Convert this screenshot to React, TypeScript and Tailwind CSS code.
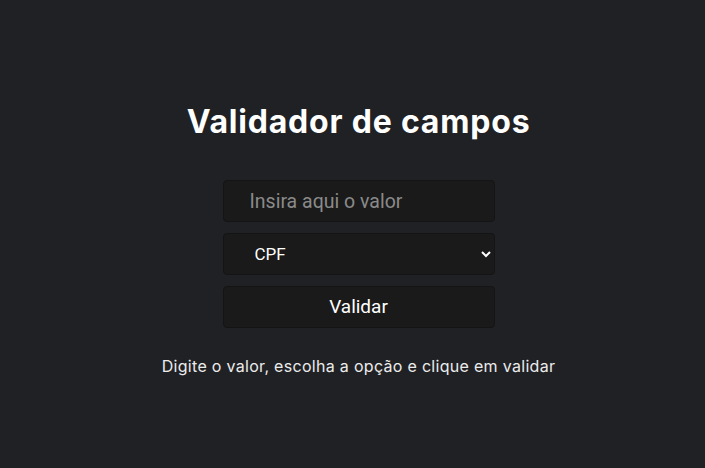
export default function App() {
  return (
    <div className="w-[705px] h-[468px] bg-[#202124] flex flex-col items-center pl-[12px]" style={{ fontFamily: "Inter, sans-serif" }}>
      <h1 className="mt-[103px] text-[32px] font-bold text-white leading-[38px] tracking-[0.8px]">Validador de campos</h1>
      <div className="mt-[39px] flex flex-col gap-[11px] w-[272px]" style={{ fontFamily: "Roboto, sans-serif" }}>
        <input
          placeholder="Insira aqui o valor"
          className="h-[42px] bg-[#1a1a1a] border border-[#141414] rounded-[4px] pl-[26px] text-[19.5px] text-white placeholder:text-[#8a8a8a] outline-none"
        />
        <select className="h-[42px] bg-[#1a1a1a] border border-[#141414] rounded-[4px] pl-[27px] pr-[2px] text-[17px] text-white outline-none">
          <option>CPF</option>
        </select>
        <button className="h-[42px] bg-[#1a1a1a] border border-[#141414] rounded-[4px] text-[19px] text-white">Validar</button>
      </div>
      <p className="mt-[26px] text-[16px] text-[#ececec] tracking-[0.3px]">Digite o valor, escolha a opção e clique em validar</p>
    </div>
  );
}
